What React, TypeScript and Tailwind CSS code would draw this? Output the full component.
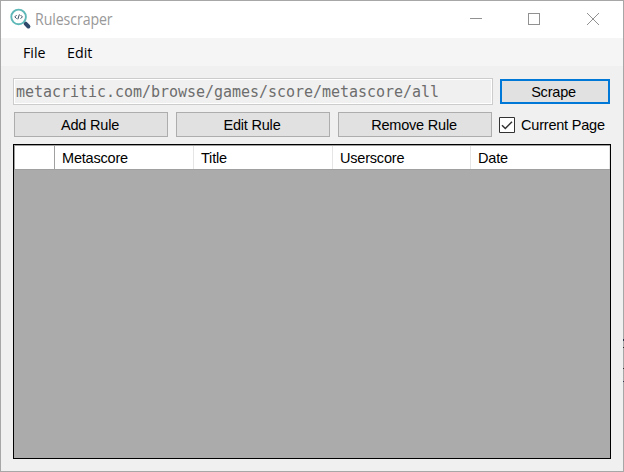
import React from 'react';

function AppIcon() {
  return (
    <svg width="22" height="22" viewBox="0 0 22 22" fill="none" className="shrink-0">
      <path d="M13.4 13.6l1.8 1.6" stroke="#7f8c9b" strokeWidth="1.4" />
      <path d="M15.6 15.7l2.8 2.8" stroke="#2f4a6b" strokeWidth="4" strokeLinecap="round" />
      <circle cx="8.6" cy="8.9" r="7.3" fill="#fff" stroke="#5fb8b8" strokeWidth="1.9" />
      <path d="M6.6 7.1L4.8 8.9l1.8 1.8M10.6 7.1l1.8 1.8-1.8 1.8M9.4 6.4L7.8 11.3" stroke="#34495e" strokeWidth="1" />
    </svg>
  );
}

function TitleBar() {
  return (
    <header className="flex h-[37px] shrink-0 bg-white pl-[9px] font-['Open_Sans','Noto_Sans',sans-serif]">
      <div className="flex pt-[7px]">
        <AppIcon />
        <span className="ml-[3px] mt-px origin-left scale-x-[0.885] text-[16px] leading-5 tracking-[-0.1px] text-[#999999]">Rulescraper</span>
      </div>
      <svg width="130" height="16" className="ml-auto mr-[23px] mt-[10px]" fill="none" stroke="#919191" shapeRendering="crispEdges">
        <path d="M0 7.5h12" />
        <path d="M58.5 2.5h11v11h-11z" />
        <path d="M117 2l12 12M129 2l-12 12" shapeRendering="auto" />
      </svg>
    </header>
  );
}

function MenuBar() {
  return (
    <nav className="flex h-7 shrink-0 gap-[20px] bg-[#f5f5f5] pl-[22px] pt-1 font-['Open_Sans','Noto_Sans',sans-serif] text-[15px] leading-5 text-black">
      <span className="origin-left scale-x-[0.95]">File</span>
      <span className="origin-left scale-x-[0.95]">Edit</span>
    </nav>
  );
}

function RuleButton({ label }: { label: string }) {
  return (
    <button className="h-[25px] w-[154px] border border-[#adadad] bg-[#e1e1e1] pr-[2px] pt-px leading-[22px]">{label}</button>
  );
}

function CurrentPage() {
  return (
    <label className="-ml-px flex items-center">
      <svg width="16" height="16" viewBox="0 0 16 16" fill="#fff" stroke="#333">
        <path d="M.5.5h15v15H.5z" />
        <path d="M3 8.2l3.3 3.3L13 4.8" fill="none" strokeWidth="1.5" />
      </svg>
      <span className="ml-[6px] whitespace-nowrap pt-[2px]">Current Page</span>
    </label>
  );
}

function ResultsGrid() {
  return (
    <section className="mt-[7px] h-[315px] w-[598px] border border-black bg-[#ababab]">
      <div className="flex h-[25px] border-y border-l border-[#a0a0a0] bg-white leading-[25px]">
        <div className="w-10 border-r border-[#a0a0a0]" />
        <div className="w-[139px] border-r border-[#e5e5e5] pl-[7px]">Metascore</div>
        <div className="w-[139px] border-r border-[#e5e5e5] pl-[7px]">Title</div>
        <div className="w-[138px] border-r border-[#e5e5e5] pl-[7px]">Userscore</div>
        <div className="flex-1 border-r border-[#e5e5e5] pl-[7px]">Date</div>
      </div>
    </section>
  );
}

export default function App() {
  return (
    <div className="relative flex h-[472px] w-[624px] flex-col border border-[#a7a7a7] bg-[#f0f0f0]">
      <TitleBar />
      <MenuBar />
      <main className="pl-3 pt-3 font-['Liberation_Sans',Arial,sans-serif] text-[14.5px] tracking-[-0.2px] text-black">
        <div className="flex items-center gap-[7px]">
          <input
            readOnly
            value="metacritic.com/browse/games/score/metascore/all"
            className="h-[27px] w-[480px] border border-[#cccccc] bg-[#f0f0f0] pl-[2px] font-['DejaVu_Sans_Mono',monospace] text-[15px] tracking-[-0.03px] text-[#6d6d6d] shadow-[inset_0_0_0_1px_#fff] outline-none"
          />
          <button className="h-[25px] w-[110px] border-2 border-[#0078d7] bg-[#e1e1e1] pr-[3px] leading-[22px]">Scrape</button>
        </div>
        <div className="ml-px mt-[7px] flex gap-2">
          <RuleButton label="Add Rule" />
          <RuleButton label="Edit Rule" />
          <RuleButton label="Remove Rule" />
          <CurrentPage />
        </div>
        <ResultsGrid />
      </main>
      <svg width="1" height="48" shapeRendering="crispEdges" className="pointer-events-none absolute -right-px top-[338px]">
        <path d="M0 .5h1M0 1.5h1M0 42.5h1" stroke="#31364f" />
        <path d="M0 8.5h1M0 29.5h1" stroke="#333" />
      </svg>
    </div>
  );
}
